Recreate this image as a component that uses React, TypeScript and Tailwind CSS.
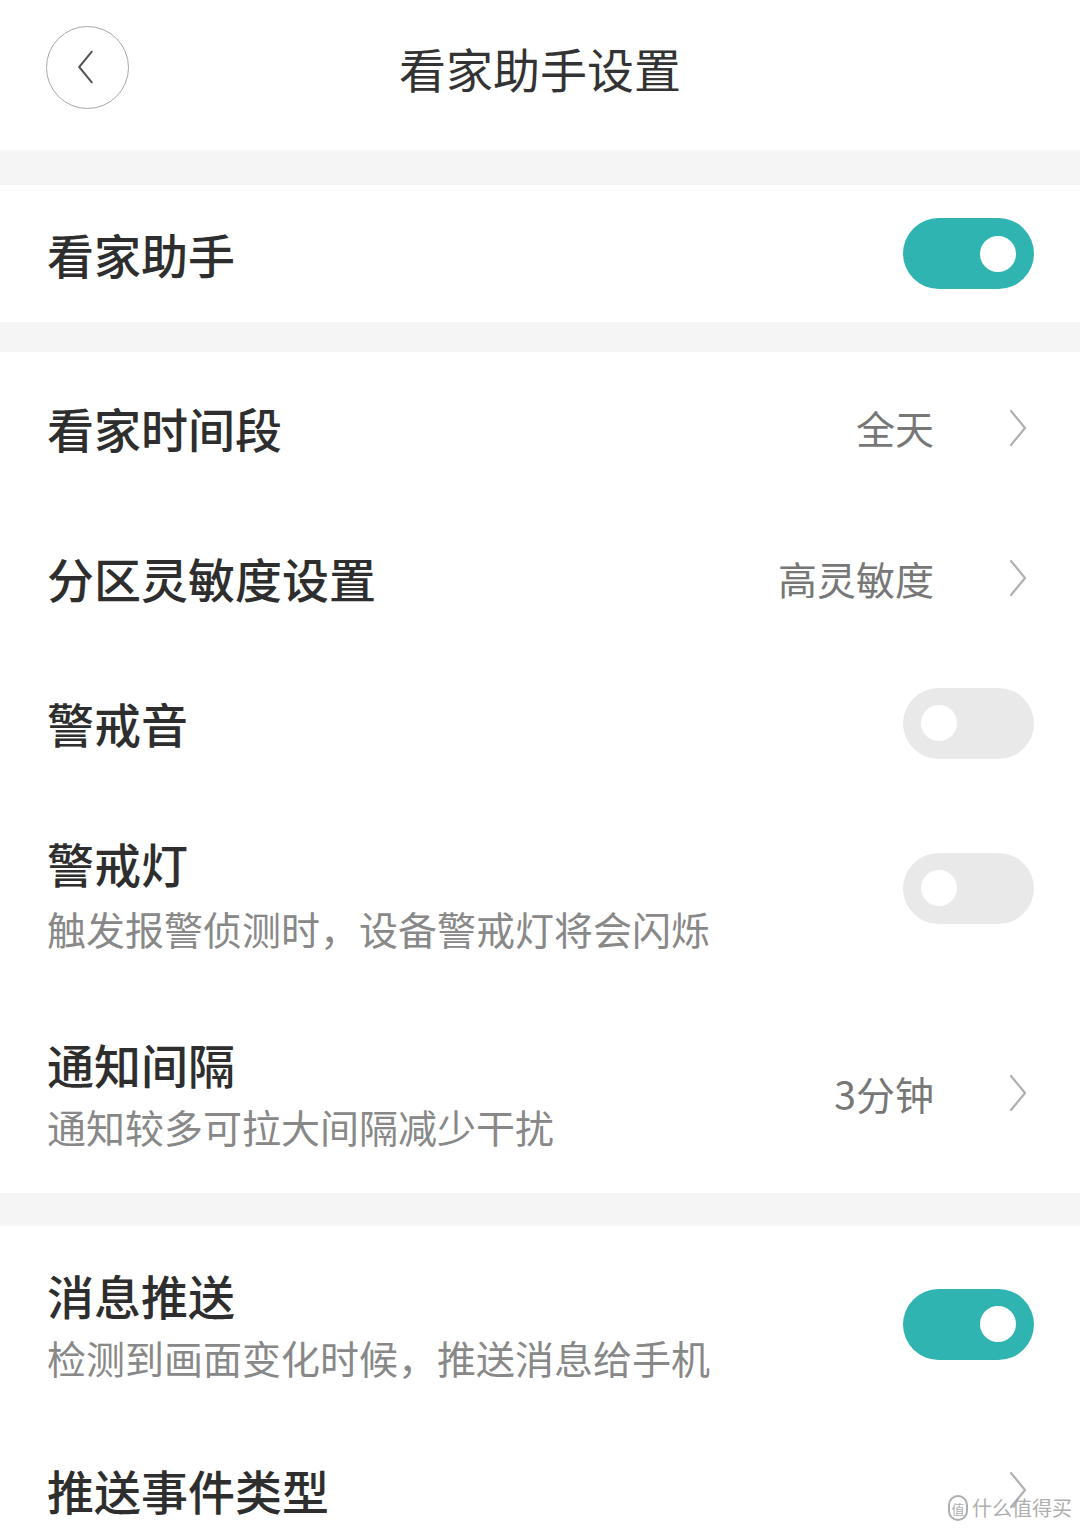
import { ReactNode } from "react"

const FONT = { fontFamily: '"Noto Sans CJK SC", "Noto Sans", sans-serif' }

// ICONS
function Chevron({ className = "" }: { className?: string }) {
    return (
        <svg viewBox="0 0 20 40" className={className} fill="none" stroke="currentColor" strokeWidth={2.2} strokeLinecap="round" strokeLinejoin="round">
            <path d="M3 3 L17 20 L3 37" />
        </svg>
    )
}

function Toggle({ on, shift = "" }: { on: boolean, shift?: string }) {
    return (
        <div className={`w-[131px] h-[71px] rounded-full flex items-center px-[18px] ${shift} ${on ? "bg-[#30b4b2] justify-end" : "bg-[#e9e9e9] justify-start"}`}>
            <div className="w-[36px] h-[36px] rounded-full bg-white" />
        </div>
    )
}

function Row({ title, sub, right, height, gap = "mt-[6px]" }: { title: string, sub?: string, right?: ReactNode, height: string, gap?: string }) {
    return (
        <div className={`flex items-center justify-between pl-[47px] pr-[46px] ${height}`}>
            <div className="flex flex-col">
                <div className="text-[47px] leading-[60px] text-[#2e2e2e] font-medium whitespace-nowrap">{title}</div>
                {sub && <div className={`${gap} text-[39px] leading-[52px] text-[#888888] whitespace-nowrap`}>{sub}</div>}
            </div>
            {right}
        </div>
    )
}

function Value({ text }: { text: string }) {
    return (
        <div className="flex items-center">
            <span className="text-[39px] text-[#777777] leading-none">{text}</span>
            <Chevron className="w-[20px] h-[40px] ml-[74px] mr-[6px] text-[#b0b0b0]" />
        </div>
    )
}

export default function App() {
    return (
        <div className="relative w-[1080px] h-[1531px] overflow-hidden bg-white" style={FONT}>

            {/* HEADER */}
            <div className="h-[150px] flex items-center relative">
                <div className="ml-[46px] -mt-[16px] w-[83px] h-[83px] rounded-full border-[1.5px] border-[#a8a8a8] flex items-center justify-center">
                    <Chevron className="w-[19px] h-[36px] -ml-[4px] text-[#555555] rotate-180" />
                </div>
                <div className="absolute left-0 right-0 top-[36px] text-center text-[47px] leading-[64px] text-[#333333]">看家助手设置</div>
            </div>

            <div className="h-[35px] bg-[#f5f5f5]" />

            {/* MAIN SWITCH */}
            <Row title="看家助手" height="h-[137px]" right={<Toggle on />} />

            <div className="h-[30px] bg-[#f5f5f5]" />

            {/* SETTINGS */}
            <Row title="看家时间段" height="h-[151px]" right={<Value text="全天" />} />
            <Row title="分区灵敏度设置" height="h-[150px]" right={<Value text="高灵敏度" />} />
            <Row title="警戒音" height="h-[140px]" right={<Toggle on={false} />} />
            <Row title="警戒灯" sub="触发报警侦测时，设备警戒灯将会闪烁" height="h-[200px]" gap="mt-[9px]" right={<Toggle on={false} shift="-mt-[10px]" />} />
            <Row title="通知间隔" sub="通知较多可拉大间隔减少干扰" height="h-[200px]" right={<Value text="3分钟" />} />

            <div className="h-[33px] bg-[#f5f5f5]" />

            {/* PUSH */}
            <Row title="消息推送" sub="检测到画面变化时候，推送消息给手机" height="h-[196px]" right={<Toggle on />} />
            <Row title="推送事件类型" height="h-[136px]" right={<Chevron className="w-[20px] h-[40px] mr-[6px] text-[#b0b0b0]" />} />

            {/* WATERMARK */}
            <div className="absolute right-[8px] bottom-[10px] flex items-center gap-[4px] text-[#9a9a9a] opacity-80">
                <div className="w-[20px] h-[26px] rounded-full border-2 border-[#9a9a9a] flex items-center justify-center text-[13px] leading-none">值</div>
                <span className="text-[20px] leading-none">什么值得买</span>
            </div>
        </div>
    )
}
